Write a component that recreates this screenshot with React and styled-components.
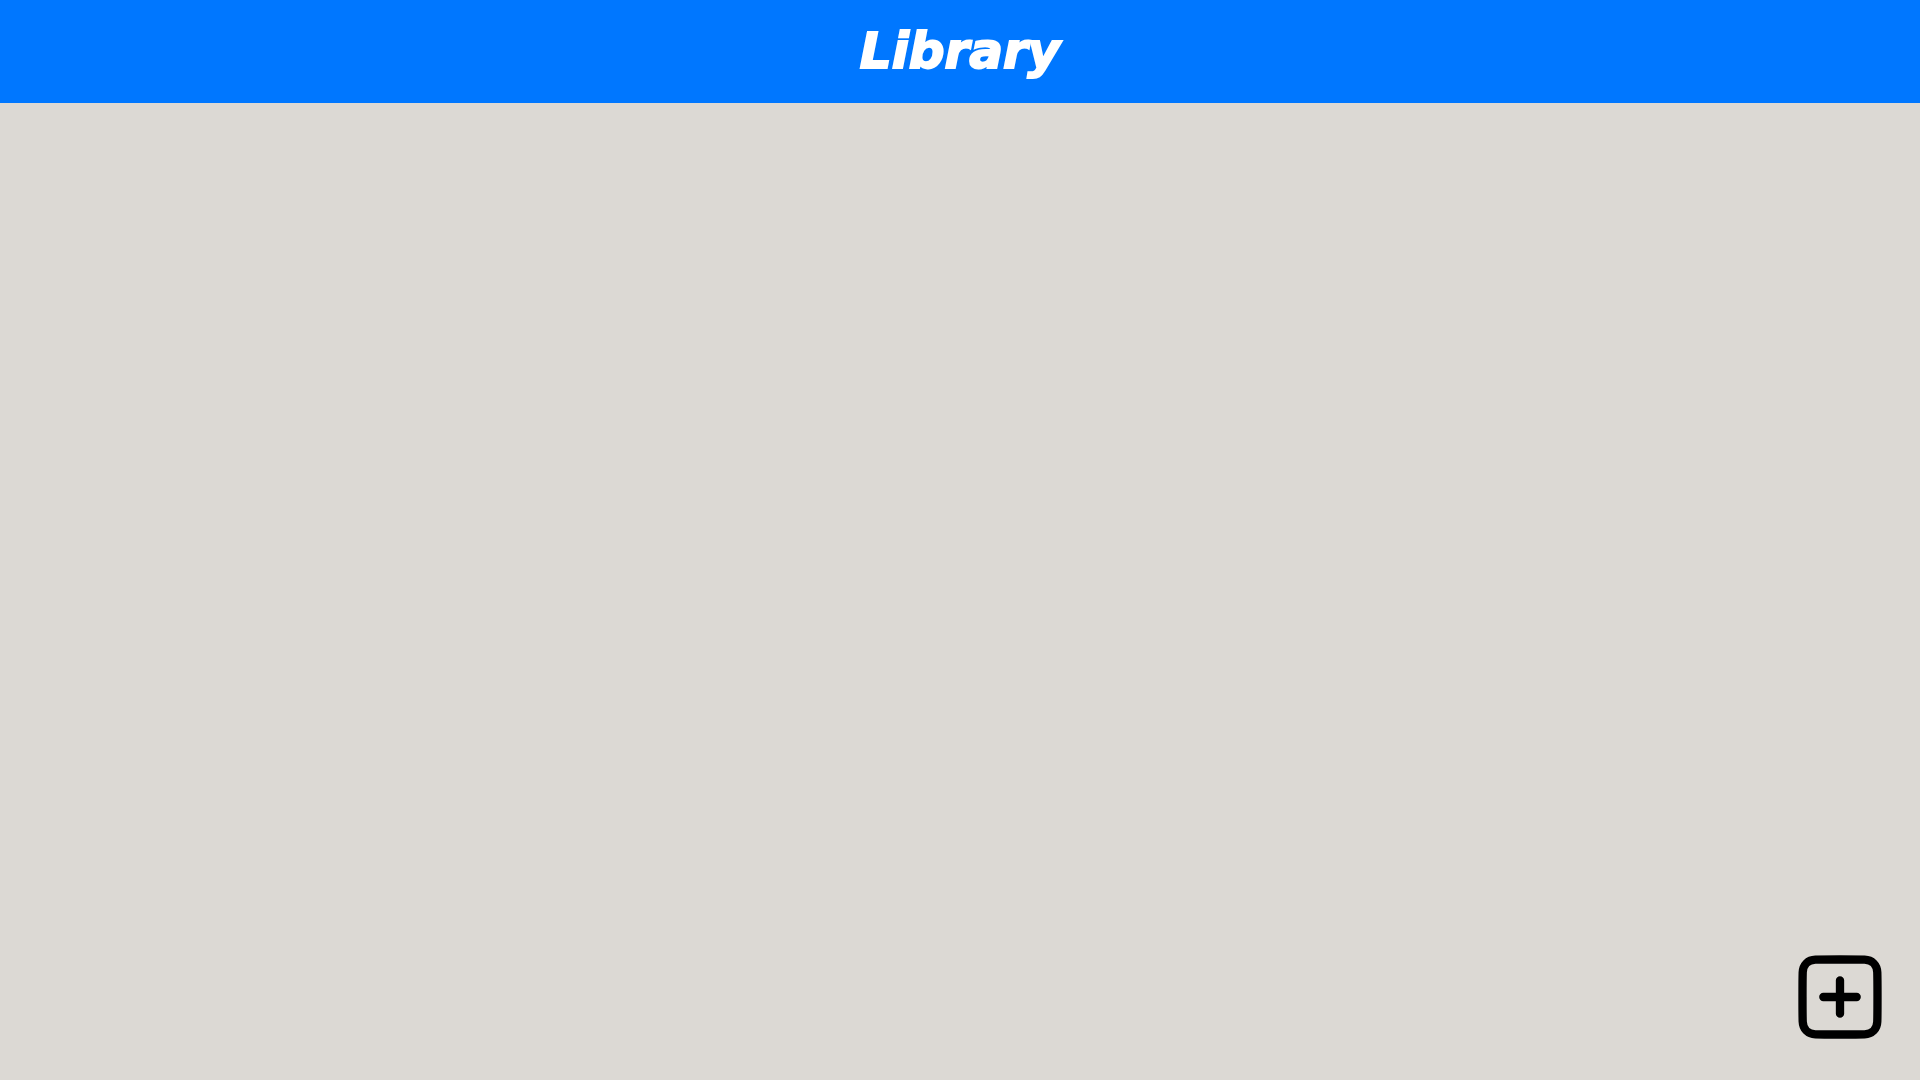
import React from "react";
import styled, { createGlobalStyle } from "styled-components";

const GlobalStyle = createGlobalStyle`
  body {
    margin: 0;
    background: #dcd9d4;
    font-family: "DejaVu Sans", sans-serif;
  }
`;

const Page = styled.div`
  display: flex;
  flex-direction: column;
  min-height: 100vh;
`;

const Header = styled.header`
  display: flex;
  justify-content: center;
  padding: 16px;
  background: #0077ff;
`;

const Title = styled.h1`
  margin: 0;
  color: #ffffff;
  font-size: 50px;
  font-style: italic;
  font-weight: 700;
  line-height: 71px;
  paint-order: stroke fill;
  -webkit-text-stroke: 2px #ffffff;
`;

const Shelf = styled.main`
  display: flex;
  flex: 1;
  align-items: flex-end;
  justify-content: flex-end;
  padding: 33px 30px;
`;

const AddButton = styled.button`
  display: flex;
  padding: 0;
  border: 0;
  background: transparent;
  color: #000000;
  cursor: pointer;
`;

const PlusIcon = styled.svg`
  width: 100px;
  height: 100px;
  fill: none;
  stroke: currentColor;
  stroke-width: 2;
  stroke-linecap: round;
  stroke-linejoin: round;
`;

export default function App() {
  return (
    <Page>
      <GlobalStyle />
      <Header>
        <Title>Library</Title>
      </Header>
      <Shelf>
        <AddButton type="button" aria-label="Add book">
          <PlusIcon viewBox="0 0 24 24" aria-hidden="true">
            <path d="M8 12h8M12 8v8" />
            <path d="M3 12C3 9 3 7.5 3.05 6.1C3.12 4.3 4.3 3.12 6.1 3.05C7.5 3 9 3 12 3C15 3 16.5 3 17.9 3.05C19.7 3.12 20.88 4.3 20.95 6.1C21 7.5 21 9 21 12C21 15 21 16.5 20.95 17.9C20.88 19.7 19.7 20.88 17.9 20.95C16.5 21 15 21 12 21C9 21 7.5 21 6.1 20.95C4.3 20.88 3.12 19.7 3.05 17.9C3 16.5 3 15 3 12Z" />
          </PlusIcon>
        </AddButton>
      </Shelf>
    </Page>
  );
}
